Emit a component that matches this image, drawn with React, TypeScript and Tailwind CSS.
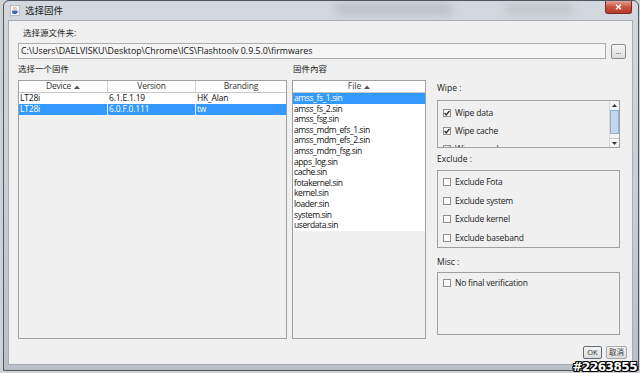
import React from 'react';

const UI = "'Open Sans','Noto Sans CJK SC',sans-serif";

const devices = [
  { device: 'LT28i', version: '6.1.E.1.19', branding: 'HK_Alan', selected: false },
  { device: 'LT28i', version: '6.0.F.0.111', branding: 'tw', selected: true },
];

const files = [
  'amss_fs_1.sin',
  'amss_fs_2.sin',
  'amss_fsg.sin',
  'amss_mdm_efs_1.sin',
  'amss_mdm_efs_2.sin',
  'amss_mdm_fsg.sin',
  'apps_log.sin',
  'cache.sin',
  'fotakernel.sin',
  'kernel.sin',
  'loader.sin',
  'system.sin',
  'userdata.sin',
];

function JavaIcon() {
  return (
    <svg width="10" height="11" viewBox="0 0 10 11">
      <rect x="0.5" y="0.5" width="9" height="10" fill="#f4f6f8" stroke="#9aa3ad" strokeWidth="0.6" />
      <path d="M4 2 C3 3 5 3.5 4 4.6" stroke="#e0792c" strokeWidth="0.9" fill="none" />
      <path d="M6 1.8 C5 3 7 3.5 6 4.6" stroke="#e0792c" strokeWidth="0.9" fill="none" />
      <path d="M2.2 5.6 H7.2 V7.6 C7.2 8.6 6.2 9.2 4.7 9.2 C3.2 9.2 2.2 8.6 2.2 7.6 Z" fill="#3b6cb4" />
      <path d="M7.2 6 C8.4 6 8.4 7.6 7.1 7.6" stroke="#3b6cb4" strokeWidth="0.7" fill="none" />
    </svg>
  );
}

function SortArrow() {
  return (
    <svg width="6" height="4" viewBox="0 0 6 4" className="ml-[3px] inline-block">
      <path d="M0 4 L3 0.5 L6 4 Z" fill="#555" />
    </svg>
  );
}

function CheckBox({ checked }: { checked?: boolean }) {
  return (
    <span className="relative flex h-[8px] w-[8px] shrink-0 items-center justify-center border border-[#8e8f8f] bg-[#fafafa]">
      {checked && (
        <svg width="6" height="6" viewBox="0 0 6 6">
          <path d="M0.6 3 L2.3 4.9 L5.5 0.8" stroke="#1e2a36" strokeWidth="1.3" fill="none" />
        </svg>
      )}
    </span>
  );
}

function Option({ label, checked, h }: { label: string; checked?: boolean; h: string }) {
  return (
    <div className={`flex items-center pl-[5px] ${h}`}>
      <CheckBox checked={checked} />
      <span className="ml-[4px] whitespace-nowrap text-[8.5px] leading-none tracking-[-0.2px] text-[#222]">{label}</span>
    </div>
  );
}

function WinButton({ text, isDefault }: { text: string; isDefault?: boolean }) {
  return (
    <button
      type="button"
      className={`flex h-[13px] items-center justify-center whitespace-nowrap rounded-[2px] border bg-gradient-to-b from-[#f4f4f4] to-[#dcdcdc] text-[7.5px] leading-none text-[#333] ${
        isDefault ? 'w-[19px] border-[#5f6a75]' : 'w-[21px] border-[#a8a8a8]'
      }`}
    >
      {text}
    </button>
  );
}

export default function App() {
  return (
    <div
      className="flex h-[373px] w-[640px] overflow-hidden bg-[#cfd2d5] pl-[3px]"
      style={{ fontFamily: UI }}
    >
      <div className="relative flex h-[371px] w-[636px] shrink-0 flex-col rounded-t-[6px] border border-[#4f565e] bg-gradient-to-b from-[#d3d8de] via-[#c9cfd6] to-[#b9c0c8]">
        {/* title bar */}
        <div className="relative flex h-[19px] items-center overflow-hidden">
          <div className="pointer-events-none absolute left-[330px] top-[2px] h-[12px] w-[120px] rounded-full bg-[#aeb3b9] opacity-60 blur-[5px]" />
          <div className="pointer-events-none absolute left-[500px] top-[3px] h-[10px] w-[70px] rounded-full bg-[#b4b8bc] opacity-60 blur-[5px]" />
          <div className="ml-[6px] flex">
            <JavaIcon />
          </div>
          <span className="relative ml-[5px] text-[9.5px] leading-none text-[#1a1a1a]">选择固件</span>
          <div className="flex-1" />
          <div className="relative mr-[6px] flex h-[13px] w-[27px] self-start items-center justify-center rounded-b-[3px] border border-t-0 border-[#7a2a22] bg-gradient-to-b from-[#e0a195] via-[#c9533f] to-[#b63a2a]">
            <svg width="7" height="6" viewBox="0 0 7 6">
              <path d="M1 0.8 L6 5.2 M6 0.8 L1 5.2" stroke="#fff" strokeWidth="1.5" />
            </svg>
          </div>
        </div>

        {/* client area */}
        <div className="relative ml-[4px] mr-[5px] flex h-[345px] flex-col border border-[#a4acb4] bg-[#f0f0f0]">
          <div className="ml-[14px] mt-[6px] flex h-[12px] items-center text-[8.5px] leading-none text-[#222]">
            选择源文件夹:
          </div>

          <div className="ml-[9px] mt-[4px] flex h-[16px]">
            <div className="flex w-[588px] items-center border border-[#abadb3] bg-[#f5f5f5] pl-[2px] text-[8.8px] leading-none text-[#111]">
              C:\Users\DAELVISKU\Desktop\Chrome\ICS\Flashtoolv 0.9.5.0\firmwares
            </div>
            <button
              type="button"
              className="ml-[5px] mt-[1px] flex h-[15px] w-[15px] items-end justify-center rounded-[2px] border border-[#8a8a8a] bg-gradient-to-b from-[#f6f6f6] to-[#dddddd] pb-[3px] text-[7px] leading-none text-[#333]"
            >
              ...
            </button>
          </div>

          <div className="ml-[9px] flex">
            {/* device table */}
            <div className="flex w-[269px] flex-col">
              <div className="flex h-[21px] items-center text-[8.5px] leading-none text-[#222]">选择一个固件</div>
              <div className="flex h-[259px] flex-col border border-[#a0a0a0]">
                <div className="grid h-[12px] grid-cols-[89px_88px_1fr] border-b border-[#c8c8c8] bg-white text-[8.5px] leading-none tracking-[-0.2px] text-[#333]">
                  <div className="flex items-center justify-center border-r border-[#d0d0d0]">
                    Device
                    <SortArrow />
                  </div>
                  <div className="flex items-center justify-center border-r border-[#d0d0d0]">Version</div>
                  <div className="flex items-center justify-center">Branding</div>
                </div>
                {devices.map((d, i) => (
                  <div
                    key={i}
                    className={`grid h-[11px] grid-cols-[89px_88px_1fr] text-[8.5px] leading-none tracking-[-0.2px] ${
                      d.selected ? 'bg-[#3399ff] text-white' : 'bg-white text-[#111]'
                    }`}
                  >
                    <div className="flex items-center border-r border-white pl-[1px]">{d.device}</div>
                    <div className="flex items-center border-r border-white pl-[1px]">{d.version}</div>
                    <div className="flex items-center pl-[1px]">{d.branding}</div>
                  </div>
                ))}
              </div>
            </div>

            {/* file table */}
            <div className="ml-[5px] flex w-[134px] flex-col">
              <div className="flex h-[21px] items-center pl-[1px] text-[8.5px] leading-none text-[#222]">固件內容</div>
              <div className="flex h-[259px] flex-col border border-[#a0a0a0]">
                <div className="flex h-[12px] items-center justify-center border-b border-[#c8c8c8] bg-white text-[8.5px] leading-none text-[#333]">
                  File
                  <SortArrow />
                </div>
                {files.map((f, i) => (
                  <div
                    key={f}
                    className={`flex h-[10.6px] items-center pl-[1px] text-[8.5px] leading-none tracking-[-0.4px] ${
                      i === 0 ? 'bg-[#3399ff] text-white' : 'bg-white text-[#111]'
                    }`}
                  >
                    {f}
                  </div>
                ))}
              </div>
            </div>

            {/* options */}
            <div className="ml-[11px] flex w-[183px] flex-col pt-[21px] text-[8.5px] leading-none text-[#222]">
              <div className="flex h-[16px] items-center">Wipe :</div>
              <div className="mt-[4px] flex h-[48px] overflow-hidden border border-[#a0a0a0]">
                <div className="flex-1 overflow-hidden pt-[3px]">
                  <Option label="Wipe data" checked h="h-[18px]" />
                  <Option label="Wipe cache" checked h="h-[18px]" />
                  <Option label="Wipe apps log" checked h="h-[18px]" />
                </div>
                <div className="flex w-[10px] flex-col border-l border-[#d6d6d6] bg-[#f4f4f4]">
                  <div className="flex h-[9px] items-center justify-center">
                    <svg width="5" height="3" viewBox="0 0 5 3">
                      <path d="M0 3 L2.5 0 L5 3 Z" fill="#333" />
                    </svg>
                  </div>
                  <div className="h-[24px] border border-[#8fb0d2] bg-[radial-gradient(#c2d8ef_1px,#dde9f6_1px)] bg-[length:2px_2px]" />
                  <div className="flex-1" />
                  <div className="flex h-[9px] items-center justify-center border-t border-[#c8c8c8]">
                    <svg width="5" height="3" viewBox="0 0 5 3">
                      <path d="M0 0 L2.5 3 L5 0 Z" fill="#333" />
                    </svg>
                  </div>
                </div>
              </div>

              <div className="flex h-[22px] items-center">Exclude :</div>
              <div className="flex h-[78px] flex-col border border-[#a0a0a0] pt-[2px]">
                <Option label="Exclude Fota" h="h-[18.7px]" />
                <Option label="Exclude system" h="h-[18.7px]" />
                <Option label="Exclude kernel" h="h-[18.7px]" />
                <Option label="Exclude baseband" h="h-[18.7px]" />
              </div>

              <div className="flex h-[24px] items-center pt-[4px]">Misc :</div>
              <div className="flex h-[63px] flex-col border border-[#a0a0a0] pt-[1px]">
                <Option label="No final verification" h="h-[18px]" />
              </div>
            </div>
          </div>

          <div className="mt-[7px] flex justify-end gap-[4px] pr-[5px]">
            <WinButton text="OK" isDefault />
            <WinButton text="取消" />
          </div>
        </div>

        <span
          className="absolute bottom-[-3px] right-[1px] text-[12px] font-bold leading-none tracking-[-0.5px] text-white"
          style={{
            fontFamily: "'DejaVu Sans',sans-serif",
            textShadow:
              '1px 0 0 #000, -1px 0 0 #000, 0 1px 0 #000, 0 -1px 0 #000, 1px 1px 0 #000, -1px -1px 0 #000, 1px -1px 0 #000, -1px 1px 0 #000',
          }}
        >
          #2263855
        </span>
      </div>
    </div>
  );
}
